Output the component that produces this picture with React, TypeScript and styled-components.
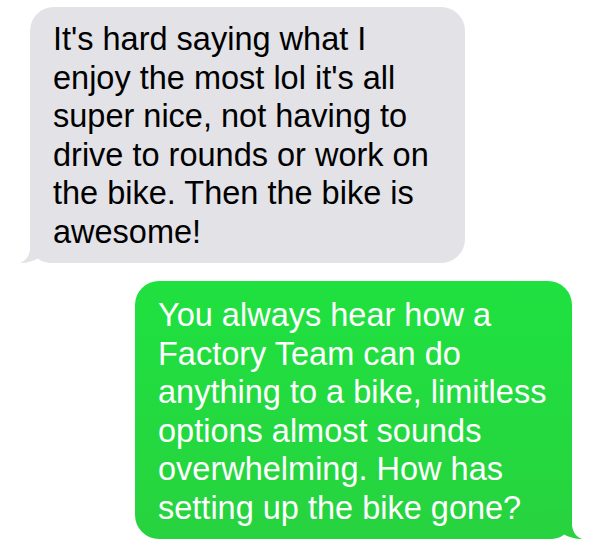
import React from "react";
import styled, { createGlobalStyle } from "styled-components";

const Global = createGlobalStyle`
  html, body { margin: 0; padding: 0; background: #ffffff; }
  body { font-family: "Liberation Sans", Arial, Helvetica, sans-serif; }
`;

const Thread = styled.div`
  display: flex;
  flex-direction: column;
  gap: 18px;
  padding: 7px 28px 0 30px;
  width: 600px;
  height: 547px;
  box-sizing: border-box;
`;

type Side = "in" | "out";

const Bubble = styled.div<{ $side: Side; $width: number }>`
  position: relative;
  box-sizing: border-box;
  width: ${(p) => p.$width}px;
  align-self: ${(p) => (p.$side === "in" ? "flex-start" : "flex-end")};
  padding: ${(p) => (p.$side === "in" ? "13px 20px 12px 23px" : "15px 20px 12px 23px")};
  border-radius: 24px;
  background: ${(p) =>
    p.$side === "in" ? "#e2e2e7" : "linear-gradient(#1fe140, #27d33f)"};
  color: ${(p) => (p.$side === "in" ? "#000000" : "#ffffff")};
  font-size: 32.5px;
  line-height: 38.5px;
  letter-spacing: 0;
`;

const Line = styled.span`
  position: relative;
  z-index: 1;
  display: block;
  white-space: nowrap;
`;

const TailSvg = styled.svg<{ $side: Side }>`
  position: absolute;
  z-index: 0;
  bottom: 0;
  width: 40px;
  height: 30px;
  ${(p) => (p.$side === "in" ? "left: -10px;" : "right: -10px; transform: scaleX(-1);")}
`;

function Tail({ side, color }: { side: Side; color: string }) {
  return (
    <TailSvg $side={side} viewBox="0 0 40 30" aria-hidden="true">
      <path
        d="M10,0 L10,15 C10,22 6,28 0,30 C6,30.3 12,28.5 18,25.5 C22,29 27,30 33,30 L40,30 L40,0 Z"
        fill={color}
      />
    </TailSvg>
  );
}

const incoming = [
  "It's hard saying what I",
  "enjoy the most lol it's all",
  "super nice, not having to",
  "drive to rounds or work on",
  "the bike. Then the bike is",
  "awesome!",
];

const outgoing = [
  "You always hear how a",
  "Factory Team can do",
  "anything to a bike, limitless",
  "options almost sounds",
  "overwhelming. How has",
  "setting up the bike gone?",
];

export default function App() {
  return (
    <>
      <Global />
      <Thread>
        <Bubble $side="in" $width={435}>
          <Tail side="in" color="#e2e2e7" />
          {incoming.map((l) => (
            <Line key={l}>{l}</Line>
          ))}
        </Bubble>
        <Bubble $side="out" $width={437}>
          <Tail side="out" color="#27d33f" />
          {outgoing.map((l) => (
            <Line key={l}>{l}</Line>
          ))}
        </Bubble>
      </Thread>
    </>
  );
}
